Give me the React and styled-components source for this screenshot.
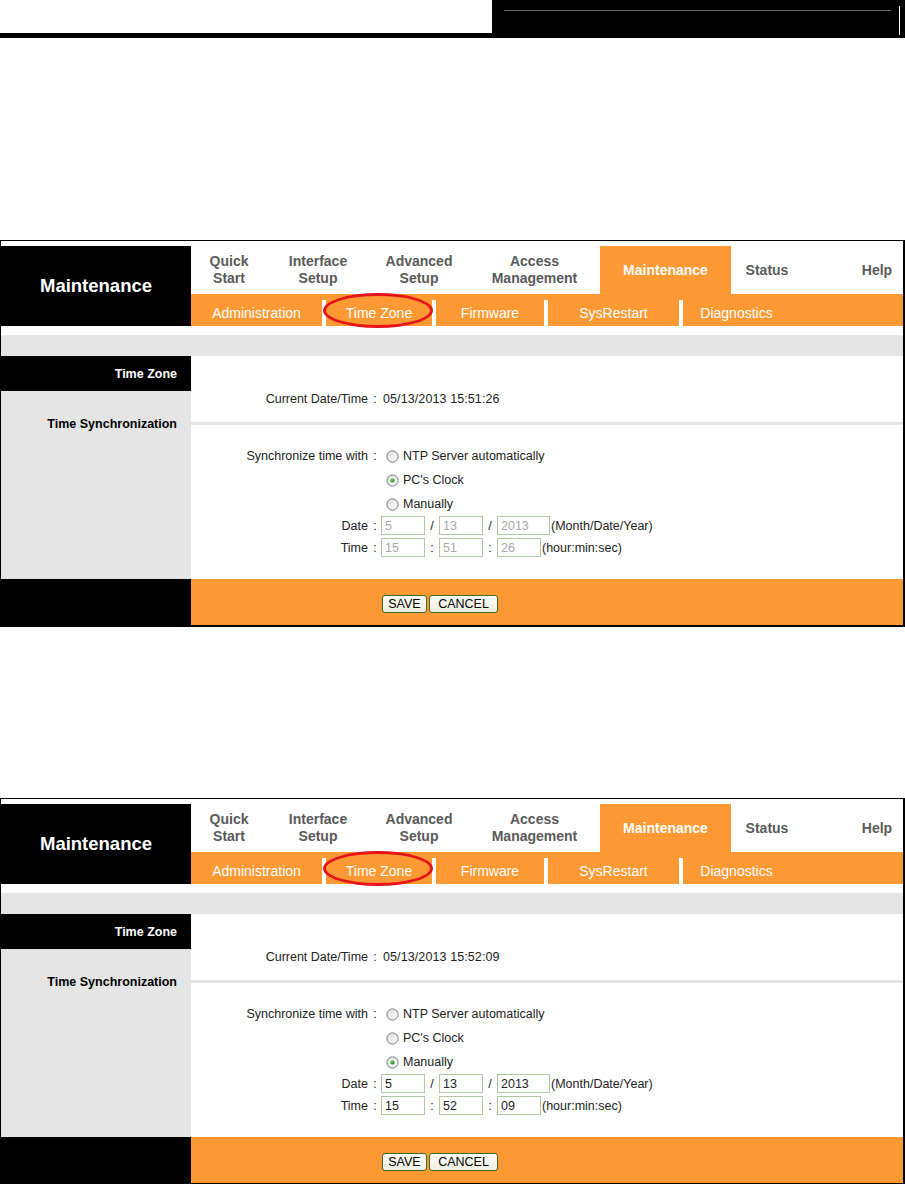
import styled, { createGlobalStyle } from "styled-components";

const ORANGE = "#ff9933";
const GRAY = "#e5e5e5";

const GlobalStyle = createGlobalStyle`
  html, body {
    margin: 0;
    padding: 0;
    background: #fff;
  }
  body {
    font-family: "Liberation Sans", Arial, sans-serif;
  }
`;

const mainNav = [
  { label: ["Quick", "Start"], w: 76 },
  { label: ["Interface", "Setup"], w: 102 },
  { label: ["Advanced", "Setup"], w: 100 },
  { label: ["Access", "Management"], w: 131 },
  { label: ["Maintenance"], w: 131, active: true },
  { label: ["Status"], w: 72 },
  { label: ["Help"], w: 52, push: true },
];

const subNav = [
  { label: "Administration", w: 131 },
  { label: "Time Zone", w: 106, marked: true },
  { label: "Firmware", w: 108 },
  { label: "SysRestart", w: 131 },
  { label: "Diagnostics", w: 107 },
];

const Radio = ({ checked }) => (
  <RadioBox viewBox="0 0 13 13" width="13" height="13">
    <defs>
      <linearGradient id="rfill" x1="0" y1="0" x2="1" y2="1">
        <stop offset="0" stopColor="#dcdcd6" />
        <stop offset="1" stopColor="#ffffff" />
      </linearGradient>
    </defs>
    <circle cx="6.5" cy="6.5" r="5.6" fill="url(#rfill)" stroke="#6f7a86" strokeWidth="1" />
    {checked && <circle cx="6.5" cy="6.5" r="2.1" fill="#2f9a2f" />}
    {checked && <circle cx="6" cy="6" r="0.8" fill="#8fe08f" />}
  </RadioBox>
);

const TimePanel = ({ gap, now, mode, date, time }) => {
  const manual = mode === "manual";
  return (
    <Panel $gap={gap}>
      <Header>
        <Brand>Maintenance</Brand>
        <NavCol>
          <MainNav>
            {mainNav.map((n) => (
              <NavItem key={n.label.join()} $w={n.w} $active={n.active} $push={n.push}>
                <span>
                  {n.label.map((l, i) => (
                    <span key={l}>
                      {i > 0 && <br />}
                      {l}
                    </span>
                  ))}
                </span>
              </NavItem>
            ))}
          </MainNav>
          <SubNav>
            {subNav.map((s, i) => (
              <SubGroup key={s.label}>
                {i > 0 && <SubSep />}
                <SubItem $w={s.w}>
                  {s.label}
                  {s.marked && <Mark />}
                </SubItem>
              </SubGroup>
            ))}
          </SubNav>
        </NavCol>
      </Header>
      <Gap />
      <Band />
      <Body>
        <Side>
          <SideHead>Time Zone</SideHead>
          <SideCell>Time Synchronization</SideCell>
        </Side>
        <Content>
          <Row $h={15}>
            <Label>Current Date/Time</Label>
            <Colon>:</Colon>
            <Value>{now}</Value>
          </Row>
          <Divider />
          <Row $h={24} $top={19}>
            <Label>Synchronize time with</Label>
            <Colon>:</Colon>
            <Choice>
              <Radio checked={false} />
              NTP Server automatically
            </Choice>
          </Row>
          <Row $h={24}>
            <span />
            <span />
            <Choice>
              <Radio checked={!manual} />
              PC's Clock
            </Choice>
          </Row>
          <Row $h={24}>
            <span />
            <span />
            <Choice>
              <Radio checked={manual} />
              Manually
            </Choice>
          </Row>
          <Row $h={19}>
            <Label>Date</Label>
            <Colon>:</Colon>
            <Fields>
              <Field $w={44} $dim={!manual} value={date[0]} readOnly />
              <Sep>/</Sep>
              <Field $w={44} $dim={!manual} value={date[1]} readOnly />
              <Sep>/</Sep>
              <Field $w={53} $dim={!manual} value={date[2]} readOnly />
              <Note>(Month/Date/Year)</Note>
            </Fields>
          </Row>
          <Row $h={19} $top={3}>
            <Label>Time</Label>
            <Colon>:</Colon>
            <Fields>
              <Field $w={44} $dim={!manual} value={time[0]} readOnly />
              <Sep>:</Sep>
              <Field $w={44} $dim={!manual} value={time[1]} readOnly />
              <Sep>:</Sep>
              <Field $w={44} $dim={!manual} value={time[2]} readOnly />
              <Note>(hour:min:sec)</Note>
            </Fields>
          </Row>
        </Content>
      </Body>
      <Footer>
        <FootSide />
        <FootMain>
          <Button $w={45}>SAVE</Button>
          <Button $w={69}>CANCEL</Button>
        </FootMain>
      </Footer>
    </Panel>
  );
};

const App = () => {
  return (
    <Page>
      <GlobalStyle />
      <TopBar>
        <TopLeft />
        <TopRight>
          <TopRule />
          <TopTick />
        </TopRight>
      </TopBar>
      <TimePanel
        gap={202}
        now="05/13/2013 15:51:26"
        mode="pc"
        date={["5", "13", "2013"]}
        time={["15", "51", "26"]}
      />
      <TimePanel
        gap={171}
        now="05/13/2013 15:52:09"
        mode="manual"
        date={["5", "13", "2013"]}
        time={["15", "52", "09"]}
      />
    </Page>
  );
};

const Page = styled.div`
  width: 905px;
  color: #222;
`;

const TopBar = styled.div`
  display: flex;
  height: 38px;
`;
const TopLeft = styled.div`
  width: 492px;
  box-sizing: border-box;
  border-bottom: 5px solid #000;
`;
const TopRight = styled.div`
  flex: 1;
  display: flex;
  align-items: flex-start;
  padding: 0 5px 0 12px;
  background: #000;
`;
const TopRule = styled.div`
  flex: 1;
  height: 1px;
  margin-top: 10px;
  background: #6b6b6b;
`;
const TopTick = styled.div`
  width: 1px;
  height: 29px;
  margin: 6px 0 0 8px;
  background: #fff;
`;

const Panel = styled.section`
  margin-top: ${(p) => p.$gap}px;
  border: 1px solid #000;
  border-right-width: 2px;
  border-bottom-width: 2px;
  padding-top: 5px;
  background: #fff;
`;

const Header = styled.div`
  display: grid;
  grid-template-columns: 190px 1fr;
  height: 80px;
`;
const Brand = styled.div`
  display: flex;
  align-items: center;
  justify-content: center;
  background: #000;
  color: #fff;
  font-size: 18.5px;
  font-weight: bold;
`;
const NavCol = styled.div`
  display: flex;
  flex-direction: column;
`;
const MainNav = styled.div`
  display: flex;
  height: 48px;
`;
const NavItem = styled.div`
  width: ${(p) => p.$w}px;
  margin-left: ${(p) => (p.$push ? "auto" : "0")};
  display: flex;
  align-items: center;
  justify-content: center;
  text-align: center;
  font-size: 14px;
  font-weight: bold;
  line-height: 17px;
  color: ${(p) => (p.$active ? "#fff" : "#5a5a5a")};
  background: ${(p) => (p.$active ? ORANGE : "transparent")};
`;
const SubNav = styled.div`
  display: flex;
  align-items: flex-end;
  height: 32px;
  background: ${ORANGE};
`;
const SubGroup = styled.div`
  display: flex;
`;
const SubSep = styled.div`
  width: 4px;
  height: 26px;
  background: #fff;
`;
const SubItem = styled.div`
  position: relative;
  width: ${(p) => p.$w}px;
  height: 26px;
  line-height: 27px;
  text-align: center;
  color: #fff;
  font-size: 14px;
`;
const Mark = styled.div`
  position: absolute;
  left: -3px;
  top: -7px;
  width: 110px;
  height: 35px;
  box-sizing: border-box;
  border: 3px solid #e8141b;
  border-radius: 50%;
`;

const Gap = styled.div`
  height: 9px;
`;
const Band = styled.div`
  height: 21px;
  background: ${GRAY};
`;

const Body = styled.div`
  display: grid;
  grid-template-columns: 190px 1fr;
  height: 223px;
`;
const Side = styled.div`
  display: flex;
  flex-direction: column;
  font-size: 12.5px;
  font-weight: bold;
  text-align: right;
`;
const SideHead = styled.div`
  height: 35px;
  line-height: 36px;
  padding-right: 14px;
  background: #000;
  color: #fff;
`;
const SideCell = styled.div`
  flex: 1;
  padding: 26px 14px 0 0;
  line-height: 15px;
  background: ${GRAY};
  color: #000;
`;

const Content = styled.div`
  display: flex;
  flex-direction: column;
  padding-top: 35px;
  font-size: 12.5px;
`;
const Row = styled.div`
  display: grid;
  grid-template-columns: 177px 14px 1fr;
  align-items: center;
  height: ${(p) => p.$h}px;
  margin-top: ${(p) => p.$top || 0}px;
`;
const Label = styled.div`
  text-align: right;
  white-space: nowrap;
`;
const Colon = styled.div`
  text-align: center;
`;
const Value = styled.div`
  white-space: nowrap;
  padding-left: 1px;
  letter-spacing: 0.1px;
`;
const Divider = styled.div`
  height: 3px;
  margin-top: 16px;
  background: ${GRAY};
`;
const Choice = styled.div`
  display: flex;
  align-items: center;
  white-space: nowrap;
`;
const RadioBox = styled.svg`
  margin: 0 4px 0 4px;
  flex: none;
`;
const Fields = styled.div`
  display: flex;
  align-items: center;
  white-space: nowrap;
  margin-left: -1px;
`;
const Field = styled.input`
  width: ${(p) => p.$w}px;
  height: 19px;
  box-sizing: border-box;
  margin: 0;
  padding: 0 3px;
  border: 1px solid #b0c8a0;
  border-radius: 0;
  background: #fff;
  font-family: "Liberation Sans", Arial, sans-serif;
  font-size: 12.5px;
  color: ${(p) => (p.$dim ? "#a8a8a8" : "#222")};
  outline: none;
`;
const Sep = styled.span`
  width: 14px;
  text-align: center;
`;
const Note = styled.span`
  margin-left: 1px;
`;

const Footer = styled.div`
  display: grid;
  grid-template-columns: 190px 1fr;
  height: 46px;
`;
const FootSide = styled.div`
  background: #000;
`;
const FootMain = styled.div`
  display: flex;
  align-items: center;
  gap: 2px;
  padding: 3px 0 0 191px;
  background: ${ORANGE};
`;
const Button = styled.button`
  width: ${(p) => p.$w}px;
  height: 18px;
  padding: 0;
  border: 1px solid #3e6a25;
  border-radius: 3px;
  background: linear-gradient(#fffffb, #efede0);
  font-family: "Liberation Sans", Arial, sans-serif;
  font-size: 12.5px;
  line-height: 16px;
  color: #000;
`;

export default App;
